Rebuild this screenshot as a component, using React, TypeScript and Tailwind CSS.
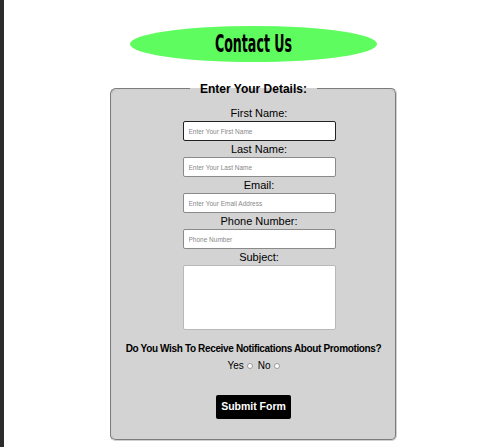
export default function App() {
  return (
    <div className="flex min-h-[447px] w-[500px] bg-white" style={{ fontFamily: "'Liberation Sans', Arial, sans-serif" }}>
      {/* dark edge on the left */}
      <div className="w-[4px] shrink-0 bg-[#2b2b2b]" />

      <main className="flex flex-1 flex-col items-center pl-[3px] pt-[26px]">
        <div className="flex h-[36px] w-[247px] items-center justify-center rounded-[50%] bg-[#5ffc5f]">
          <h1
            className="inline-block scale-x-[0.78] scale-y-[1.4] text-[18px] font-bold leading-none text-black"
            style={{ fontFamily: "'DejaVu Sans Condensed', 'DejaVu Sans', sans-serif" }}
          >
            Contact Us
          </h1>
        </div>

        <form className="mt-[19px] w-[287px]">
          <fieldset className="flex flex-col items-center rounded-[6px] border-2 border-[#d0d0d0] bg-[#d3d3d3] px-2 pb-[20px] pt-[8px] [border-style:groove]">
            <legend className="mx-auto px-[10px] text-[12px] font-bold leading-[16px] text-black">
              Enter Your Details:
            </legend>

            <div className="ml-[11px] flex flex-col items-center">
              <label className="text-[11px] leading-[16px] text-black">First Name:</label>
              <input
                placeholder="Enter Your First Name"
                className="h-[20px] w-[153px] rounded-[2px] border border-[#222] bg-white px-[5px] text-[6.5px] placeholder:text-[#888]"
              />

              <label className="text-[11px] leading-[16px] text-black">Last Name:</label>
              <input
                placeholder="Enter Your Last Name"
                className="h-[20px] w-[153px] rounded-[2px] border border-[#8a8a8a] bg-white px-[5px] text-[6.5px] placeholder:text-[#888]"
              />

              <label className="text-[11px] leading-[16px] text-black">Email:</label>
              <input
                placeholder="Enter Your Email Address"
                className="h-[20px] w-[153px] rounded-[2px] border border-[#8a8a8a] bg-white px-[5px] text-[6.5px] placeholder:text-[#888]"
              />

              <label className="text-[11px] leading-[16px] text-black">Phone Number:</label>
              <input
                placeholder="Phone Number"
                className="h-[20px] w-[153px] rounded-[2px] border border-[#8a8a8a] bg-white px-[5px] text-[6.5px] placeholder:text-[#888]"
              />

              <label className="text-[11px] leading-[16px] text-black">Subject:</label>
              <textarea className="h-[65px] w-[153px] resize-none rounded-[2px] border border-[#b8b8b8] bg-white" />
            </div>

            <p className="mt-[12px] whitespace-nowrap text-[10px] font-bold leading-[14px] tracking-[-0.35px] text-black">
              Do You Wish To Receive Notifications About Promotions?
            </p>

            <div className="mt-[3px] flex items-center text-[10px] leading-[14px] text-black">
              <span>Yes</span>
              <span className="ml-[3px] mr-[5px] inline-block h-[6px] w-[6px] rounded-full border border-[#9a9a9a] bg-white" />
              <span>No</span>
              <span className="ml-[3px] inline-block h-[6px] w-[6px] rounded-full border border-[#9a9a9a] bg-white" />
            </div>

            <button
              type="button"
              className="mt-[22px] h-[24px] w-[75px] rounded-[2px] bg-black text-[10.5px] font-bold text-white"
            >
              Submit Form
            </button>
          </fieldset>
        </form>
      </main>
    </div>
  );
}
